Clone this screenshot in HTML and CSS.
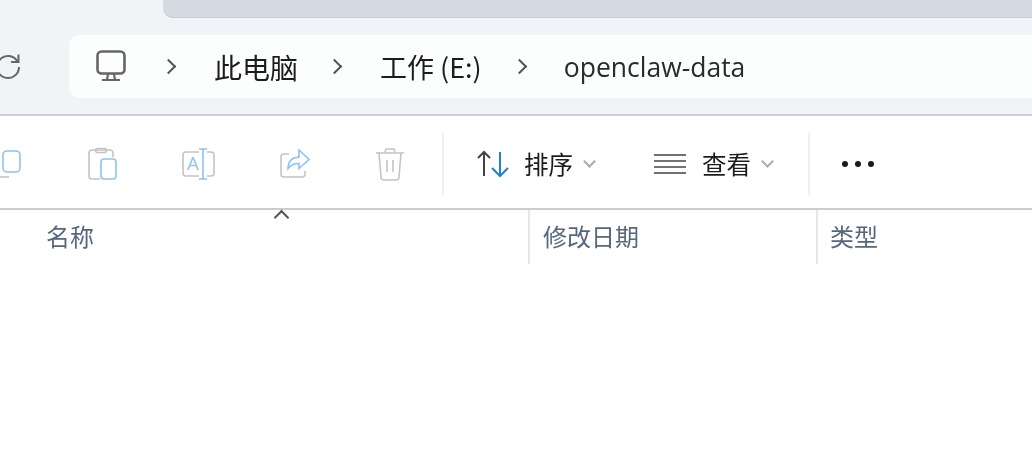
FILE: index.html
```html
<!DOCTYPE html>
<html lang="zh-CN">
<head>
    <meta charset="UTF-8">
    <title>openclaw-data</title>
    <link rel="stylesheet" href="styles.css">
</head>
<body>

    <div class="tab-strip">
        <div class="tab"></div>
    </div>

    <div class="nav-bar">
        <svg class="refresh" width="28" height="28" viewBox="0 0 28 28" fill="none" stroke="#666" stroke-width="2">
            <path d="M23.500 9.500A11 11 0 1 0 25 15"/>
            <path d="M24.500 2.500v7.500h-7.500"/>
        </svg>
        <div class="address">
            <svg class="pc-icon" width="30" height="32" viewBox="0 0 30 32" fill="none" stroke="#666" stroke-width="2.600">
                <rect x="1.500" y="1.500" width="27" height="22" rx="4"/>
                <path d="M12 24l-1 6M18 24l1 6M6 30h18" stroke-width="2.200"/>
            </svg>
            <span class="chev"></span>
            <span class="crumb crumb-pc">此电脑</span>
            <span class="chev chev-drive"></span>
            <span class="crumb crumb-drive">工作 (E:)</span>
            <span class="chev chev-folder"></span>
            <span class="crumb crumb-folder">openclaw-data</span>
        </div>
    </div>

    <div class="toolbar">
        <div class="tool tool-first">
            <svg width="32" height="32" viewBox="0 0 32 32" fill="none" stroke-width="1.600">
                <path d="M8 29h11" stroke="#c4c4c4"/>
                <rect x="13" y="3" width="17" height="21" rx="4" stroke="#8cc4ee"/>
            </svg>
        </div>
        <div class="tool">
            <svg width="32" height="34" viewBox="0 0 32 34" fill="none" stroke-width="1.600">
                <path d="M14 32H6a3 3 0 0 1-3-3V6a3 3 0 0 1 3-3h18a3 3 0 0 1 3 3v4" stroke="#c4c4c4"/>
                <rect x="9.500" y="1.500" width="11" height="4" rx="2" stroke="#c4c4c4"/>
                <rect x="15" y="12" width="15" height="20" rx="3" stroke="#8cc4ee"/>
            </svg>
        </div>
        <div class="tool">
            <svg width="34" height="34" viewBox="0 0 34 34" fill="none" stroke-width="1.600">
                <path d="M18 5H5a3 3 0 0 0-3 3v18a3 3 0 0 0 3 3h13M26 5h4a3 3 0 0 1 3 3v18a3 3 0 0 1-3 3h-4" stroke="#c4c4c4"/>
                <path d="M22 2v30M18 2h8M18 32h8" stroke="#8cc4ee"/>
                <text x="6" y="23" class="tool-letter">A</text>
            </svg>
        </div>
        <div class="tool tool-share">
            <svg width="32" height="32" viewBox="0 0 32 32" fill="none" stroke-width="1.600">
                <path d="M10 6H5a3 3 0 0 0-3 3v17a3 3 0 0 0 3 3h18a3 3 0 0 0 3-3v-3" stroke="#c4c4c4"/>
                <path d="M20 2l10 9.500-10 9v-5c-5 0-8 1-11 5 0-7 4-11 11-11.500z" stroke="#8cc4ee"/>
            </svg>
        </div>
        <div class="tool">
            <svg width="30" height="34" viewBox="0 0 30 34" fill="none" stroke="#c4c4c4" stroke-width="1.600">
                <path d="M1 6h28M10 5l1-3h8l1 3M4 6l2 24a3 3 0 0 0 3 3h12a3 3 0 0 0 3-3l2-24M12 13v12M18 13v12"/>
            </svg>
        </div>
        <div class="divider divider-left"></div>
        <div class="menu menu-sort">
            <svg width="34" height="28" viewBox="0 0 34 28" fill="none" stroke-width="2">
                <path d="M8 26V2M2 8l6-6 6 6" stroke="#444"/>
                <path d="M24 2v24M16 18l8 8 8-8" stroke="#1d82d6"/>
            </svg>
            <span class="menu-label">排序</span>
            <span class="caret"></span>
        </div>
        <div class="menu menu-view">
            <svg width="32" height="22" viewBox="0 0 32 22" fill="none" stroke="#444" stroke-width="1.600">
                <path d="M0 2h32M0 8h32M0 14h32M0 20h32"/>
            </svg>
            <span class="menu-label">查看</span>
            <span class="caret"></span>
        </div>
        <div class="divider"></div>
        <div class="more">
            <span class="dot"></span>
            <span class="dot"></span>
            <span class="dot"></span>
        </div>
    </div>

    <div class="headers">
        <div class="col col-name">名称<span class="sort-up"></span></div>
        <div class="col col-date">修改日期</div>
        <div class="col col-type">类型</div>
    </div>

</body>
</html>
```

FILE: styles.css
```css
html, body {
    height: 100%;
}

body {
    margin: 0;
    overflow: hidden;
    background-color: white;
    color: #1c1c1c;
    font-family: "Noto Sans CJK SC", "Noto Sans", sans-serif;
    filter: blur(0.5px);
}

/* Top strip and tab */
.tab-strip {
    height: 18px;
    padding-left: 163px;
    background-color: #f2f3f7;
}

.tab {
    height: 18px;
    box-sizing: border-box;
    background-color: #d4dae2;
    border-bottom: 1px solid #c6ccd4;
    border-radius: 0 0 0 10px;
}

/* Address row */
.nav-bar {
    height: 98px;
    box-sizing: border-box;
    display: flex;
    align-items: flex-start;
    padding-top: 17px;
    background-color: #f2f3f7;
    border-bottom: 2px solid #c9ced6;
}

.refresh {
    flex: none;
    margin: 17px 47px 0 -6px;
}

.address {
    flex: 1;
    height: 63px;
    display: flex;
    align-items: center;
    background-color: #fcfdfd;
    border-radius: 10px 0 0 10px;
}

.pc-icon {
    margin: 0 0 2px 27px;
}

.chev {
    width: 9px;
    height: 9px;
    margin-left: 37px;
    border-top: 2px solid #555;
    border-right: 2px solid #555;
    transform: rotate(45deg);
}

.chev-drive {
    margin-left: 31px;
}

.chev-folder {
    margin-left: 32px;
}

.crumb {
    font-size: 28px;
    white-space: nowrap;
}

.crumb-pc {
    margin-left: 40px;
}

.crumb-drive {
    margin-left: 40px;
    font-size: 27px;
}

.crumb-folder {
    margin-left: 39px;
    font-family: "Open Sans", "Noto Sans", sans-serif;
    font-size: 26.500px;
    color: #2b2b2b;
}

/* Toolbar */
.toolbar {
    height: 94px;
    box-sizing: border-box;
    display: flex;
    align-items: center;
    padding-top: 3px;
    border-bottom: 2px solid #c9ced6;
}

.tool {
    flex: none;
    width: 96px;
    display: flex;
    justify-content: center;
}

.tool-first {
    margin-left: -42px;
}

.tool-share {
    padding-left: 2px;
    box-sizing: border-box;
}

.tool-letter {
    font-family: "Open Sans", sans-serif;
    font-size: 19px;
    fill: #8cc4ee;
    stroke: none;
}

.divider {
    flex: none;
    width: 2px;
    height: 62px;
    background-color: #efefef;
}

.divider-left {
    margin-left: 4px;
}

.menu {
    flex: none;
    display: flex;
    align-items: center;
}

.menu-sort {
    margin-left: 32px;
}

.menu-view {
    margin-left: 60px;
}

.menu-label {
    font-size: 24.500px;
    margin-left: 14px;
}

.menu-view .menu-label {
    margin-left: 16px;
}

.caret {
    width: 7px;
    height: 7px;
    margin: -4px 0 0 12px;
    border-right: 2px solid #aaa;
    border-bottom: 2px solid #aaa;
    transform: rotate(45deg);
}

.menu-view + .divider {
    margin-left: 36px;
}

.more {
    flex: none;
    display: flex;
    gap: 7px;
    margin-left: 32px;
}

.dot {
    width: 6px;
    height: 6px;
    border-radius: 50%;
    background-color: #1a1a1a;
}

/* Column headers */
.headers {
    height: 54px;
    display: flex;
    font-size: 24px;
    color: #56677d;
}

.col {
    box-sizing: border-box;
    padding-top: 6px;
    line-height: 40px;
}

.col-name {
    position: relative;
    width: 528px;
    padding-left: 46px;
}

.col-date {
    width: 288px;
    padding-left: 13px;
    border-left: 2px solid #e6e6e6;
}

.col-type {
    flex: 1;
    padding-left: 12px;
    border-left: 2px solid #e6e6e6;
}

.sort-up {
    position: absolute;
    left: 276px;
    top: 2px;
    width: 9px;
    height: 9px;
    border-top: 2px solid #555;
    border-left: 2px solid #555;
    transform: rotate(45deg);
}
```
